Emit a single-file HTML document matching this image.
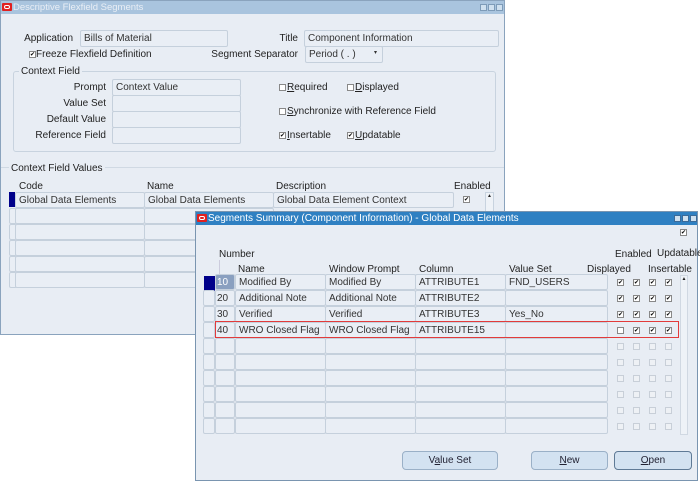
<!DOCTYPE html><html><head><style>
*{box-sizing:border-box;margin:0;padding:0}
body{width:700px;height:482px;background:#fff;position:relative;overflow:hidden;font-family:"Liberation Sans",Arial,sans-serif;font-size:10px;color:#222}
.a{position:absolute;white-space:nowrap}
.win{position:absolute;background:#e8edf4;border:1px solid #8aa3bd}
.f{position:absolute;background:#e9eef5;border:1px solid #c5d0dc;border-radius:2px;padding:1px 3px;line-height:13px;color:#333}
.cb{position:absolute;width:7px;height:7px;border:1px solid #888;background:#fff;font-size:6px;line-height:6px;text-align:center;color:#000}
.cb.d{border-color:#c8cfd8;background:#eef1f5}
.btn{position:absolute;height:19px;border:1px solid #9ab0c7;border-radius:4px;background:#d3e2f1;text-align:center;line-height:17px;color:#223}
.rt{text-align:right}
</style></head><body>

<div class="win" style="left:0;top:0;width:505px;height:335px">
<div class="a" style="left:0;top:0;width:503px;height:13px;background:#a9c4de"></div>
<div class="a" style="left:1px;top:2px;width:10px;height:8px;background:#e02020;border-radius:1px"><div class="a" style="left:2px;top:2px;width:6px;height:4px;border:1px solid #fff;border-radius:2px"></div></div>
<div class="a" style="left:12px;top:1px;color:#e9eef5;font-size:9.5px">Descriptive Flexfield Segments</div>
<div class="a" style="left:479px;top:3px;width:7px;height:7px;background:#cfe0ef;border:1px solid #7d9bb8"></div>
<div class="a" style="left:487px;top:3px;width:7px;height:7px;background:#cfe0ef;border:1px solid #7d9bb8"></div>
<div class="a" style="left:495px;top:3px;width:7px;height:7px;background:#cfe0ef;border:1px solid #7d9bb8"></div>

<div class="a rt" style="left:0;top:32px;width:72px">Application</div>
<div class="f" style="left:79px;top:29px;width:148px;height:17px">Bills of Material</div>
<div class="a rt" style="left:250px;top:32px;width:47px">Title</div>
<div class="f" style="left:303px;top:29px;width:195px;height:17px">Component Information</div>
<div class="cb" style="left:28px;top:50px">✔</div>
<div class="a" style="left:35px;top:48px">Freeze Flexfield Definition</div>
<div class="a rt" style="left:200px;top:48px;width:97px">Segment Separator</div>
<div class="f" style="left:304px;top:45px;width:78px;height:17px">Period ( . )<span class="a" style="left:68px;top:0;font-size:6px">▾</span></div>

<div class="a" style="left:12px;top:70px;width:483px;height:81px;border:1px solid #c8d3df;border-radius:3px"></div>
<div class="a" style="left:18px;top:65px;background:#e8edf4;padding:0 2px">Context Field</div>
<div class="a rt" style="left:20px;top:81px;width:85px">Prompt</div>
<div class="a rt" style="left:20px;top:97px;width:85px">Value Set</div>
<div class="a rt" style="left:20px;top:113px;width:85px">Default Value</div>
<div class="a rt" style="left:20px;top:129px;width:85px">Reference Field</div>
<div class="f" style="left:111px;top:78px;width:129px;height:17px">Context Value</div>
<div class="f" style="left:111px;top:94px;width:129px;height:17px"></div>
<div class="f" style="left:111px;top:110px;width:129px;height:17px"></div>
<div class="f" style="left:111px;top:126px;width:129px;height:17px"></div>
<div class="cb" style="left:278px;top:83px"></div><div class="a" style="left:286px;top:81px"><u>R</u>equired</div>
<div class="cb" style="left:346px;top:83px"></div><div class="a" style="left:354px;top:81px"><u>D</u>isplayed</div>
<div class="cb" style="left:278px;top:107px"></div><div class="a" style="left:286px;top:105px"><u>S</u>ynchronize with Reference Field</div>
<div class="cb" style="left:278px;top:131px">✔</div><div class="a" style="left:286px;top:129px"><u>I</u>nsertable</div>
<div class="cb" style="left:346px;top:131px">✔</div><div class="a" style="left:354px;top:129px"><u>U</u>pdatable</div>

<div class="a" style="left:0;top:166px;width:503px;height:1px;background:#d0d9e3"></div>
<div class="a" style="left:8px;top:162px;background:#e8edf4;padding:0 2px">Context Field Values</div>
<div class="a" style="left:18px;top:180px">Code</div>
<div class="a" style="left:146px;top:180px">Name</div>
<div class="a" style="left:275px;top:180px">Description</div>
<div class="a" style="left:453px;top:180px">Enabled</div>
<div class="a" style="left:8px;top:191px;width:6px;height:15px;background:#00008a"></div>
<div class="f" style="left:14px;top:191px;width:130px;height:16px">Global Data Elements</div>
<div class="f" style="left:143px;top:191px;width:130px;height:16px">Global Data Elements</div>
<div class="f" style="left:272px;top:191px;width:181px;height:16px">Global Data Element Context</div>
<div class="cb" style="left:462px;top:195px">✔</div>
<div class="a" style="left:484px;top:191px;width:9px;height:30px;border:1px solid #c8d3df;background:#eef2f7;font-size:5px;text-align:center">▲</div>
<div class="f" style="left:8px;top:207px;width:7px;height:16px"></div><div class="f" style="left:14px;top:207px;width:130px;height:16px"></div><div class="f" style="left:143px;top:207px;width:130px;height:16px"></div>
<div class="f" style="left:8px;top:223px;width:7px;height:16px"></div><div class="f" style="left:14px;top:223px;width:130px;height:16px"></div><div class="f" style="left:143px;top:223px;width:130px;height:16px"></div>
<div class="f" style="left:8px;top:239px;width:7px;height:16px"></div><div class="f" style="left:14px;top:239px;width:130px;height:16px"></div><div class="f" style="left:143px;top:239px;width:130px;height:16px"></div>
<div class="f" style="left:8px;top:255px;width:7px;height:16px"></div><div class="f" style="left:14px;top:255px;width:130px;height:16px"></div><div class="f" style="left:143px;top:255px;width:130px;height:16px"></div>
<div class="f" style="left:8px;top:271px;width:7px;height:16px"></div><div class="f" style="left:14px;top:271px;width:130px;height:16px"></div><div class="f" style="left:143px;top:271px;width:130px;height:16px"></div>
</div>

<div class="win" style="left:195px;top:211px;width:503px;height:270px;border-color:#7a95b0">
<div class="a" style="left:0;top:0;width:501px;height:13px;background:#2f80c2"></div>
<div class="a" style="left:1px;top:2px;width:10px;height:8px;background:#e02020;border-radius:1px"><div class="a" style="left:2px;top:2px;width:6px;height:4px;border:1px solid #fff;border-radius:2px"></div></div>
<div class="a" style="left:12px;top:1px;color:#fff">Segments Summary (Component Information) - Global Data Elements</div>
<div class="a" style="left:478px;top:3px;width:7px;height:7px;background:#cfe0ef;border:1px solid #3a6a99"></div>
<div class="a" style="left:486px;top:3px;width:7px;height:7px;background:#cfe0ef;border:1px solid #3a6a99"></div>
<div class="a" style="left:494px;top:3px;width:7px;height:7px;background:#cfe0ef;border:1px solid #3a6a99"></div>
<div class="cb" style="left:484px;top:17px">✔</div>
<div class="a" style="left:23px;top:37px">Number</div>
<div class="a" style="left:23px;top:48px;width:1px;height:14px;background:#ccd"></div>
<div class="a" style="left:42px;top:52px">Name</div>
<div class="a" style="left:133px;top:52px">Window Prompt</div>
<div class="a" style="left:223px;top:52px">Column</div>
<div class="a" style="left:313px;top:52px">Value Set</div>
<div class="a" style="left:391px;top:52px">Displayed</div>
<div class="a" style="left:419px;top:37px">Enabled</div>
<div class="a" style="left:461px;top:36px">Updatable</div>
<div class="a" style="left:452px;top:52px">Insertable</div>
<div class="a" style="left:8px;top:64px;width:11px;height:15px;background:#00008a"></div>
<div class="a" style="left:484px;top:63px;width:8px;height:160px;border:1px solid #d0d8e2;background:#eef2f7;font-size:5px;text-align:center">▲</div>
</div>
<div id="rows"></div>
<script>
var rows=[["10","Modified By","Modified By","ATTRIBUTE1","FND_USERS",1],["20","Additional Note","Additional Note","ATTRIBUTE2","",1],["30","Verified","Verified","ATTRIBUTE3","Yes_No",1],["40","WRO Closed Flag","WRO Closed Flag","ATTRIBUTE15","",2]];
var h="";
for(var i=0;i<10;i++){var y=274+i*16;var r=rows[i]||["","","","","",0];
if(i>0)h+='<div class="f" style="left:203px;top:'+y+'px;width:12px;height:16px"></div>';
h+='<div class="f" style="left:215px;top:'+y+'px;width:20px;height:16px;padding:1px 1px'+(i==0?';background:#8aa0c0;color:#fff':'')+'">'+r[0]+'</div>';
h+='<div class="f" style="left:235px;top:'+y+'px;width:91px;height:16px">'+r[1]+'</div>';
h+='<div class="f" style="left:325px;top:'+y+'px;width:91px;height:16px">'+r[2]+'</div>';
h+='<div class="f" style="left:415px;top:'+y+'px;width:91px;height:16px">'+r[3]+'</div>';
h+='<div class="f" style="left:505px;top:'+y+'px;width:103px;height:16px">'+r[4]+'</div>';
[617,633,649,665].forEach(function(x,k){var c=r[5]==1||(r[5]==2&&k>0);h+='<div class="cb'+(r[5]?'':' d')+'" style="left:'+x+'px;top:'+(y+5)+'px">'+(c?'✔':'')+'</div>';});
}
h+='<div class="a" style="left:215px;top:321px;width:464px;height:17px;border:1px solid #e23b3b"></div>';
h+='<div class="btn" style="left:402px;top:451px;width:96px">V<u>a</u>lue Set</div>';
h+='<div class="btn" style="left:531px;top:451px;width:77px"><u>N</u>ew</div>';
h+='<div class="btn" style="left:614px;top:451px;width:78px;border-color:#5f7a96"><u>O</u>pen</div>';
document.getElementById("rows").innerHTML=h;
</script>
</body></html>
